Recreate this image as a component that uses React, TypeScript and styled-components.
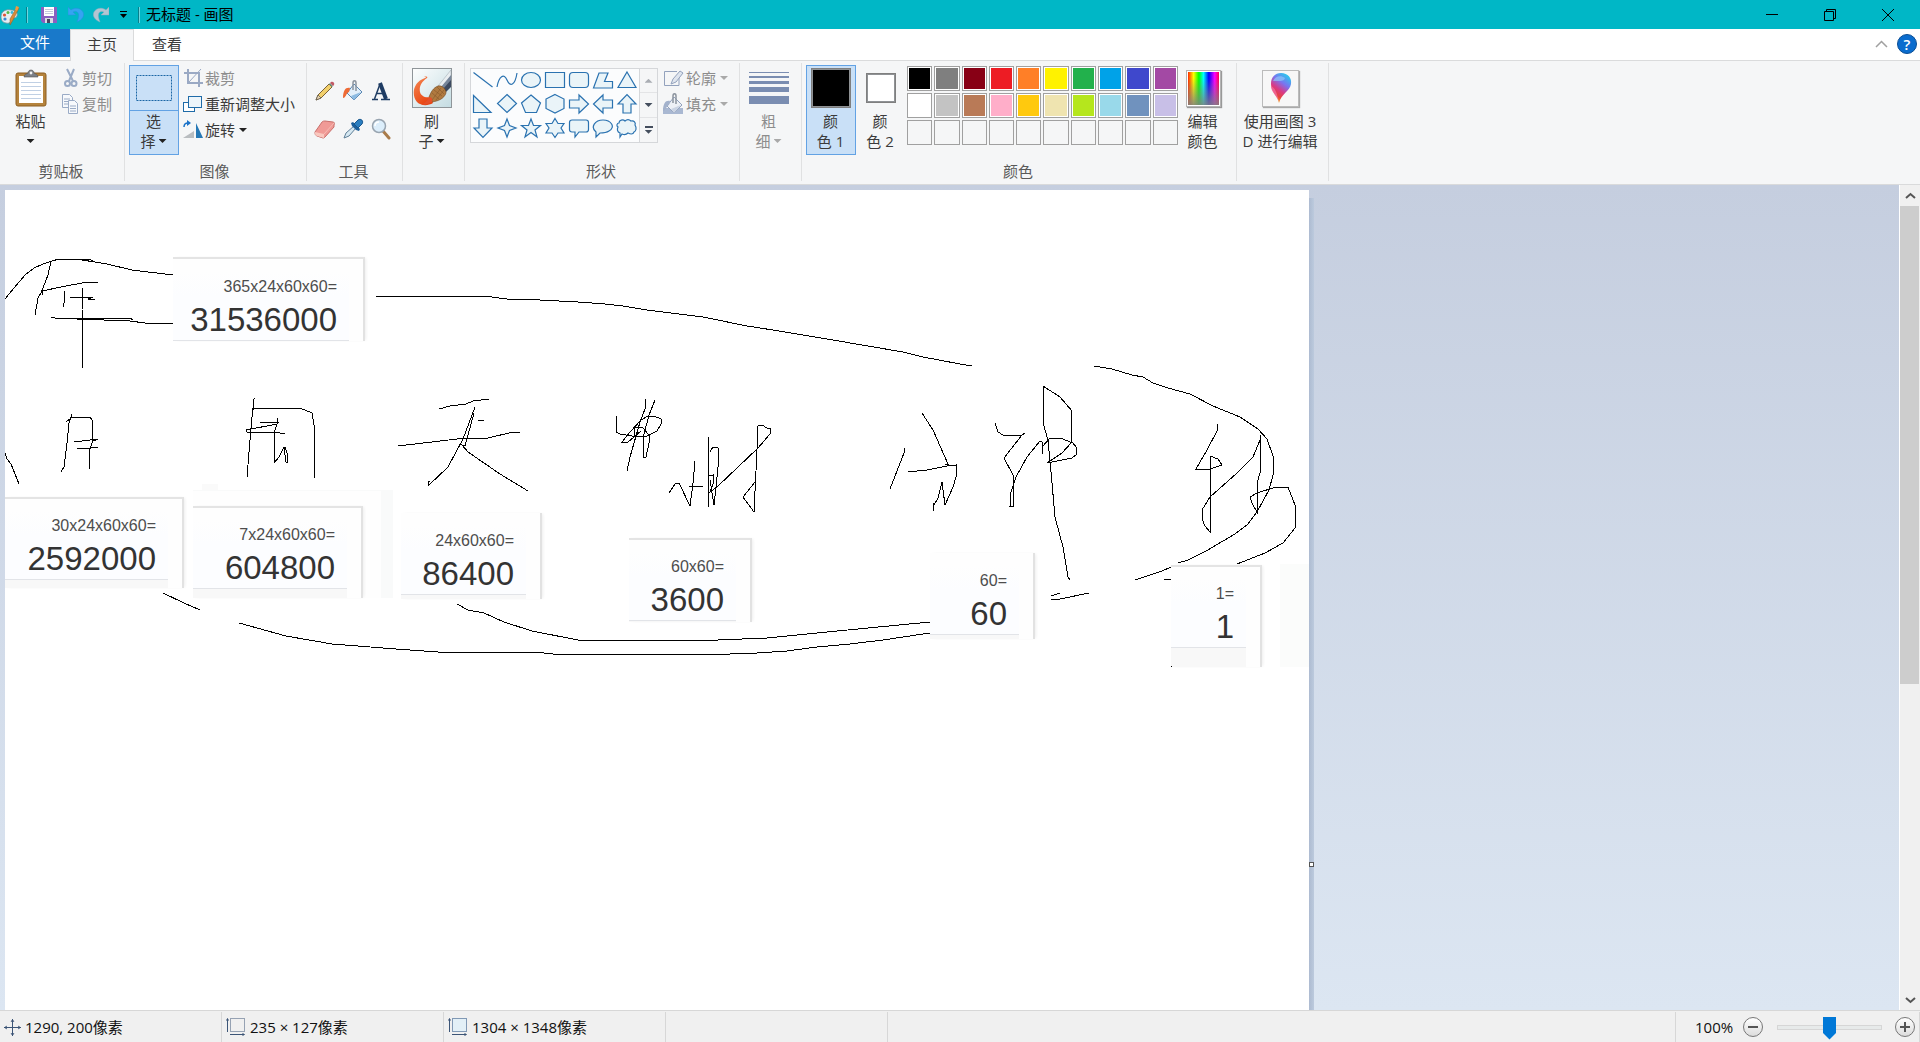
import React from 'react';
import styled, { createGlobalStyle } from 'styled-components';

const Global = createGlobalStyle`
  *, *::before, *::after { box-sizing: border-box; }
  html, body { margin: 0; padding: 0; }
  body {
    font-family: "Open Sans", "Noto Sans CJK SC", sans-serif;
    font-size: 15px;
    line-height: 20px;
    color: #3b3b3b;
  }
  button {
    font: inherit;
    color: inherit;
    background: none;
    border: 0;
    padding: 0;
    margin: 0;
  }
  svg { display: block; flex: none; }
`;

const Window = styled.div`
  display: flex;
  flex-direction: column;
  height: 100vh;
  overflow: hidden;
  background: #f5f6f7;
`;

/* ---------- title bar ---------- */

const TitleBar = styled.header`
  display: flex;
  align-items: center;
  height: 29px;
  flex: none;
  padding-right: 3px;
  background: #00b7c6;
  color: #000;
`;

const QuickAccess = styled.div`
  display: flex;
  align-items: center;
  height: 29px;
`;

const QuickButton = styled.button<{ $w?: number }>`
  display: flex;
  align-items: center;
  justify-content: center;
  width: ${(p) => p.$w ?? 26}px;
  height: 29px;
`;

const Divider = styled.span`
  width: 2px;
  height: 16px;
  margin: 0 6px;
  background: #087f8b;
  border-right: 1px solid #6fd6df;
`;

const Title = styled.h1`
  margin: 0;
  padding-bottom: 2px;
  flex: 1;
  font-size: 15px;
  line-height: 20px;
  font-weight: 400;
`;

const CaptionButton = styled.button`
  display: flex;
  align-items: center;
  justify-content: center;
  width: 58px;
  height: 29px;
`;

/* ---------- tabs ---------- */

const TabRow = styled.nav`
  display: flex;
  flex: none;
  height: 32px;
  background: #fff;
  border-bottom: 1px solid #dadbdc;
`;

const FileTab = styled.button`
  width: 70px;
  height: 28px;
  padding-bottom: 2px;
  background: #1979ca;
  color: #fff;
`;

const Tab = styled.button<{ $active?: boolean }>`
  width: ${(p) => (p.$active ? 64 : 66)}px;
  height: 32px;
  padding-bottom: 4px;
  border: 1px solid ${(p) => (p.$active ? '#dadbdc' : 'transparent')};
  border-bottom: 0;
  background: ${(p) => (p.$active ? '#f5f6f7' : 'transparent')};
`;

const TabTools = styled.div`
  display: flex;
  align-items: center;
  gap: 9px;
  margin-left: auto;
  padding: 0 3px 2px 0;
`;

const HelpButton = styled.button`
  width: 20px;
  height: 20px;
  border-radius: 50%;
  border: 1px solid #0a4d94;
  background: #0a6cce;
  color: #fff;
  font-size: 15px;
  line-height: 18px;
  font-weight: 600;
`;

/* ---------- ribbon ---------- */

const Ribbon = styled.section`
  display: flex;
  flex: none;
  height: 124px;
  padding: 2px 0 3px;
  background: #f5f6f7;
  border-bottom: 1px solid #d9dadb;
`;

const Group = styled.div<{ $w: number }>`
  display: flex;
  flex-direction: column;
  flex: none;
  width: ${(p) => p.$w}px;
  border-right: 1px solid #e0e1e2;
`;

const GroupBody = styled.div`
  display: flex;
  flex: 1;
  align-items: flex-start;
  padding: 2px 0 0 4px;
`;

const GroupLabel = styled.div`
  height: 20px;
  padding-right: 2px;
  color: #5a5a5a;
  text-align: center;
`;

const BigButton = styled.button<{ $w: number; $on?: boolean; $off?: boolean }>`
  display: flex;
  flex-direction: column;
  align-items: center;
  flex: none;
  width: ${(p) => p.$w}px;
  height: 90px;
  border: 1px solid ${(p) => (p.$on ? '#62a2e4' : 'transparent')};
  background: ${(p) => (p.$on ? '#c9e0f7' : 'transparent')};
  color: ${(p) => (p.$off ? '#8d8d8d' : 'inherit')};
`;

const IconArea = styled.span<{ $split?: boolean }>`
  display: flex;
  align-items: center;
  justify-content: center;
  align-self: stretch;
  flex: none;
  height: 45px;
  border-bottom: 1px solid ${(p) => (p.$split ? '#62a2e4' : 'transparent')};
`;

const TextLine = styled.span`
  display: flex;
  align-items: center;
  justify-content: center;
  gap: 3px;
  height: 20px;
  padding-right: 1px;
  white-space: pre;
`;

const Caret = styled.span<{ $color?: string; $up?: boolean }>`
  width: 8px;
  height: 4px;
  background: ${(p) => p.$color ?? '#222'};
  clip-path: ${(p) =>
    p.$up ? 'polygon(50% 0, 100% 100%, 0 100%)' : 'polygon(0 0, 100% 0, 50% 100%)'};
`;

const SmallColumn = styled.div`
  display: flex;
  flex-direction: column;
  padding-left: 4px;
`;

const SmallButton = styled.button<{ $off?: boolean }>`
  display: flex;
  align-items: center;
  height: 26px;
  gap: 2px;
  color: ${(p) => (p.$off ? '#8d8d8d' : 'inherit')};
  white-space: nowrap;

  ${Caret} { margin-left: 2px; }
`;

const ToolGrid = styled.div`
  display: grid;
  grid-template-columns: repeat(3, 28px);
  grid-auto-rows: 38px;
  padding-top: 7px;
`;

const ToolButton = styled.button`
  display: flex;
  align-items: center;
  justify-content: center;
`;

const Gallery = styled.div`
  display: flex;
  height: 75px;
  margin: 3px 0 0 1px;
  border: 1px solid #d5d7da;
  background: #fbfcfd;
`;

const ShapeGrid = styled.div`
  display: grid;
  grid-template-columns: repeat(7, 24px);
  grid-auto-rows: 24px;
  margin-top: -1px;
`;

const GalleryScroll = styled.div`
  display: grid;
  grid-template-rows: repeat(3, 1fr);
  width: 18px;
  border-left: 1px solid #d5d7da;
  background: #f5f6f7;
`;

const ScrollStep = styled.button`
  display: flex;
  flex-direction: column;
  align-items: center;
  justify-content: center;
  gap: 2px;
  border-bottom: 1px solid #e3e4e6;

  &:last-child { border-bottom: 0; }
`;

const Bar = styled.span`
  width: 8px;
  height: 2px;
  background: #444e5e;
`;

const CurrentColor = styled.span<{ $size: number; $fill: string }>`
  width: ${(p) => p.$size}px;
  height: ${(p) => p.$size}px;
  border: 1px solid #7f7f7f;
  outline: 1px solid #8f9295;
  outline-offset: -2px;
  background: ${(p) => p.$fill};
`;

const Palette = styled.div`
  display: grid;
  grid-template-columns: repeat(10, 1fr);
  grid-template-rows: repeat(3, 25px);
  gap: 2px;
  flex: none;
  width: 271px;
  margin: 1px 0 0 2px;
`;

const Swatch = styled.button<{ $fill?: string }>`
  border: 1px solid #a0a0a0;
  background-color: ${(p) => p.$fill ?? '#f5f6f7'};
  box-shadow: inset 0 0 0 1px ${(p) => (p.$fill ? '#fff' : '#f5f6f7')};
`;

const Spectrum = styled.span`
  width: 35px;
  height: 37px;
  border: 1px solid #b4b4b4;
  outline: 1px solid #fff;
  outline-offset: -2px;
  box-shadow: 1px 1px 1px #999;
  background:
    linear-gradient(to bottom, rgba(128, 128, 128, 0) 20%, rgba(128, 128, 128, 0.9)),
    linear-gradient(to right, #f00, #ff0 20%, #0f0 36%, #0ff 50%, #00f 66%, #f0f 84%, #f02);
`;

const Tile = styled.span`
  display: flex;
  align-items: center;
  justify-content: center;
  width: 37px;
  height: 37px;
  border: 1px solid #bbb;
  box-shadow: 1px 1px 1px #aaa;
  background: #f7f7f7;
`;

/* ---------- workspace ---------- */

const Workspace = styled.main`
  display: flex;
  flex: 1;
  min-height: 0;
`;

const Viewport = styled.div`
  flex: 1;
  min-width: 0;
  overflow: hidden;
  padding: 5px;
  background: linear-gradient(#c5cedf, #dce6f2);
`;

const Canvas = styled.div`
  position: relative;
  width: 1304px;
  height: 1348px;
  background: #fff;

  &::after {
    content: "";
    position: absolute;
    left: 100%;
    top: 8px;
    bottom: 0;
    width: 5px;
    background: linear-gradient(to right, #adbbd1, #bccadd);
  }
`;

const ResizeHandle = styled.span`
  position: absolute;
  z-index: 1;
  left: 100%;
  top: 50%;
  width: 5px;
  height: 5px;
  margin-top: -2px;
  border: 1px solid #555;
  background: #fff;
`;

const Ink = styled.svg`
  position: absolute;
  inset: 0;
`;

const Patch = styled.div<{ $x: number; $y: number; $w: number; $h: number; $fill: string }>`
  position: absolute;
  left: ${(p) => p.$x}px;
  top: ${(p) => p.$y}px;
  width: ${(p) => p.$w}px;
  height: ${(p) => p.$h}px;
  background: ${(p) => p.$fill};
`;

const Clip = styled.div<{ $x: number; $y: number; $w: number; $h: number; $top: boolean }>`
  position: absolute;
  left: ${(p) => p.$x}px;
  top: ${(p) => p.$y}px;
  width: ${(p) => p.$w}px;
  height: ${(p) => p.$h}px;
  padding-right: 14px;
  border-right: 2px solid #e2e2e2;
  border-top: ${(p) => (p.$top ? 2 : 0)}px solid #e4e4e4;
  background: #fefefe;
  box-shadow: 2px 0 3px -1px #eee;
`;

const Display = styled.div<{ $h: number }>`
  display: flex;
  flex-direction: column;
  justify-content: flex-end;
  gap: 3px;
  height: ${(p) => p.$h}px;
  padding-right: 12px;
  border-bottom: 1px solid #e2e4e8;
  background: linear-gradient(#fefefe 12px, #fcfdff 36px);
  font-family: "Liberation Sans", sans-serif;
  text-align: right;
`;

const Footer = styled.div<{ $h: number }>`
  height: ${(p) => p.$h}px;
  background: #f8f8f8;
`;

const Formula = styled.div`
  font-size: 16px;
  line-height: 20px;
  color: #4d4d4d;
`;

const Result = styled.div`
  font-size: 33px;
  line-height: 40px;
  color: #333;
`;

const ScrollBar = styled.div`
  display: flex;
  flex-direction: column;
  flex: none;
  width: 21px;
  border-left: 1px solid #fff;
  background: #f0f0f0;
`;

const ScrollArrow = styled.button`
  display: flex;
  align-items: center;
  justify-content: center;
  flex: none;
  height: 21px;
`;

const Track = styled.div`
  flex: 1;
  padding-right: 1px;
`;

const Thumb = styled.div`
  height: 61%;
  background: #cdcdcd;
`;

/* ---------- status bar ---------- */

const StatusBar = styled.footer`
  display: flex;
  flex: none;
  height: 32px;
  padding-top: 1px;
  border-top: 1px solid #d7d7d7;
  background: #f0f0f0;
  color: #111;
`;

const StatusCell = styled.div`
  display: flex;
  align-items: center;
  gap: 4px;
  width: 222px;
  padding-left: 4px;
  border-right: 1px solid #d7d7d7;
`;

const ZoomArea = styled.div`
  display: flex;
  align-items: center;
  margin-left: auto;
  padding: 0 4px 0 19px;
  border-left: 1px solid #d7d7d7;
  border-right: 1px solid #d7d7d7;
`;

const ZoomLabel = styled.label`
  width: 48px;
`;

const RoundButton = styled.button`
  display: flex;
  align-items: center;
  justify-content: center;
  width: 20px;
  height: 20px;
  border: 1px solid #777;
  border-radius: 50%;
  background: linear-gradient(#fff, #dcdcdc);
`;

const Slider = styled.input`
  appearance: none;
  width: 105px;
  height: 24px;
  margin: 0 13px 0 14px;
  background: transparent;

  &::-webkit-slider-runnable-track {
    height: 5px;
    border: 1px solid #d6d6d6;
    background: #e7eaea;
  }

  &::-webkit-slider-thumb {
    appearance: none;
    width: 13px;
    height: 23px;
    margin-top: -9px;
    background: #0078d7;
    clip-path: polygon(0 0, 100% 0, 100% 72%, 50% 100%, 0 72%);
  }
`;

/* ---------- icons ---------- */

const AppIcon = () => (
  <svg width="20" height="20" viewBox="0 0 20 20">
    <path d="M1 12C1 6 6 4 11 5c5 0 7 3 6 6-1 3-4 1-5 3-1 3-3 5-6 4-3 0-5-3-5-6z" fill="#e4eef2" stroke="#71929c" strokeWidth=".8" />
    <circle cx="4.500" cy="10" r="1.600" fill="#e0523a" />
    <circle cx="8" cy="7.500" r="1.500" fill="#58b947" />
    <circle cx="5" cy="14" r="1.600" fill="#3c86d4" />
    <circle cx="12" cy="7.500" r="1.400" fill="#3fb8d8" />
    <path d="M17 2l2 1-6 12-3 5 0-6z" fill="#d98b3a" stroke="#9a5b1d" strokeWidth=".5" />
    <path d="M16 1l3 1-2 4-2-1z" fill="#ef9b3f" />
  </svg>
);

const SaveIcon = () => (
  <svg width="16" height="16" viewBox="0 0 16 16">
    <path d="M0 0h16v16H2l-2-2z" fill="#8a5fc0" />
    <path d="M3 0h10v9H3z" fill="#fff" />
    <path d="M4 2.500h8M4 4.500h8M4 6.500h8" stroke="#c5c9dd" />
    <path d="M4 11h8v5H4z" fill="#d9dbe2" />
    <path d="M6 12h3v4H6z" fill="#4a4560" />
  </svg>
);

const UndoIcon = () => (
  <svg width="16" height="17" viewBox="0 0 16 17">
    <path d="M0 1v8h8L5 6c4-2 8 1 4 10 5-2 8-6 6-10C13 2 7 1 3 4z" fill="#35a4f2" stroke="#2391de" strokeWidth=".5" />
  </svg>
);

const RedoIcon = () => (
  <svg width="16" height="17" viewBox="0 0 16 17">
    <path d="M16 1v8H8l3-3c-4-2-8 1-4 10C2 14-1 10 1 6 3 2 9 1 13 4z" fill="#b3c5d2" stroke="#93aaba" strokeWidth=".5" />
  </svg>
);

const QatMenuIcon = () => (
  <svg width="7" height="8" viewBox="0 0 7 8">
    <path d="M0 .5h7" stroke="#000" />
    <path d="M0 3h7L3.500 7z" fill="#000" />
  </svg>
);

const ClipboardIcon = () => (
  <svg width="32" height="38" viewBox="0 0 32 38">
    <rect x="1" y="4" width="30" height="33" rx="2" fill="#b5833c" stroke="#8d5f22" />
    <rect x="4" y="7" width="24" height="27" fill="#fff" />
    <path d="M6 13.500h20M6 17.500h20M6 21.500h20M6 25.500h20M6 29.500h20" stroke="#c0d0e4" />
    <path d="M9 8c0-3 3-3 4-4 0-4 6-4 6 0 1 1 4 1 4 4z" fill="#7c8087" stroke="#555" strokeWidth=".6" />
    <circle cx="16" cy="4" r="1.400" fill="#f3f4f5" />
  </svg>
);

const CutIcon = () => (
  <svg width="18" height="20" viewBox="0 0 18 20" fill="none" stroke="#9aabc6" strokeWidth="2">
    <path d="M5 1l6 12M12 1L7 13" />
    <circle cx="5.500" cy="15.500" r="2.500" />
    <circle cx="12" cy="15.500" r="2.500" />
  </svg>
);

const CopyIcon = () => (
  <svg width="18" height="20" viewBox="0 0 18 20" fill="#f7f9fc" stroke="#9aabc6">
    <path d="M.5 .5h7l3 3v10H.5z" />
    <path d="M2 5h6M2 7.500h6M2 10h6" />
    <path d="M6.500 6.500h6l3 3v10h-9z" />
    <path d="M8 12h6M8 14.500h6M8 17h6" />
  </svg>
);

const SelectIcon = () => (
  <svg width="36" height="26" viewBox="0 0 36 26">
    <rect x=".5" y=".5" width="35" height="25" fill="none" stroke="#1b66a5" strokeDasharray="2 1" />
  </svg>
);

const CropIcon = () => (
  <svg width="20" height="18" viewBox="0 0 20 18" fill="none" stroke="#9aa9c4">
    <path d="M5 0v14h15M1 4h15v14" strokeWidth="2" />
    <path d="M18 0L6 13" />
  </svg>
);

const ResizeIcon = () => (
  <svg width="20" height="17" viewBox="0 0 20 17" fill="#fff" stroke="#1f6ba8">
    <rect x=".5" y="6.500" width="11" height="9" />
    <rect x="5.500" y=".5" width="13" height="11" fill="#edf5fa" />
  </svg>
);

const RotateIcon = () => (
  <svg width="20" height="20" viewBox="0 0 20 20">
    <path d="M11 11v7H0z" fill="#b9bdc0" />
    <path d="M13 3l7 15h-7z" fill="#2678b5" />
    <path d="M1 7c0-3 1-4 4-4" fill="none" stroke="#1b72c8" strokeWidth="1.500" />
    <path d="M4 0l4 3-4 3z" fill="#1b72c8" />
  </svg>
);

const PencilIcon = () => (
  <svg width="22" height="22" viewBox="0 0 22 22">
    <path d="M2 20l2-5L15 4l3 3L7 18z" fill="#f2d06c" stroke="#7c6237" />
    <path d="M2 20l2-5 3 3z" fill="#e9d4b0" stroke="#444" strokeWidth=".6" />
    <path d="M15 4l3 3 1-1-3-3z" fill="#6b9a86" />
    <path d="M16 3l1-1c2-1 4 1 3 3l-1 1z" fill="#c25a66" />
  </svg>
);

const BucketIcon = ({ off }: { off?: boolean }) => (
  <svg width="22" height="22" viewBox="0 0 22 22">
    {off && <rect x="1" y="15" width="20" height="6" fill="#a9b8d2" />}
    <path d="M12 4l8 8-8 8-7-7z" fill={off ? '#eef1f6' : '#e2effa'} stroke={off ? '#93a2bd' : '#5a87b3'} />
    <path d="M9 16l10-4-7 8z" fill={off ? '#cbd4e3' : '#8dbbe2'} />
    <path d="M11 10V3c0-3 3-3 3 0v8" fill="none" stroke="#8c949e" strokeWidth="1.500" />
    <path d="M8 8C4 7 1 10 1 18c3 0 3-5 6-6z" fill={off ? '#a3b2cc' : '#ee6a35'} />
  </svg>
);

const TextIcon = () => (
  <svg width="20" height="20" viewBox="0 0 20 20" fill="none" stroke="#1e3c63">
    <path d="M3.500 18L9 3" strokeWidth="1.500" />
    <path d="M9 2l6 16" strokeWidth="4" />
    <path d="M6 12.500h6" strokeWidth="1.500" />
    <path d="M1 18.500h6M10 18.500h9" strokeWidth="1.500" />
  </svg>
);

const EraserIcon = () => (
  <svg width="22" height="22" viewBox="0 0 22 22">
    <path d="M1 14L8 4c1-1 2-1 3-1l8 1c1 0 2 1 1 3v2l-9 10c-1 1-1 1-2 1l-6-2c-2-1-2-2-2-4z" fill="#f09a96" stroke="#c9706c" />
    <path d="M1 14l9 2v4l-7-2c-2-1-2-2-2-4z" fill="#f9c8bf" />
    <path d="M10 16L20 5" stroke="#f7bbb4" />
  </svg>
);

const PickerIcon = () => (
  <svg width="22" height="22" viewBox="0 0 22 22">
    <path d="M2 20l2-5 8-7 2 2-7 8z" fill="#d6e8f2" stroke="#5f7f97" />
    <path d="M9 5l2-1 7 7-1 2-3-1-4-4z" fill="#1c5f9b" />
    <path d="M12 6l4-4c3-2 6 1 4 4l-4 4z" fill="#2b7ec0" stroke="#17558c" />
  </svg>
);

const MagnifierIcon = () => (
  <svg width="22" height="22" viewBox="0 0 22 22">
    <path d="M13 13l6 7" stroke="#a97b4a" strokeWidth="3" strokeLinecap="round" />
    <circle cx="9" cy="8" r="6.500" fill="#dceefb" stroke="#98a4b0" strokeWidth="1.500" />
    <path d="M5 8c0-3 2-4 4-4" fill="none" stroke="#fff" strokeWidth="1.500" />
  </svg>
);

const BrushIcon = () => (
  <svg width="40" height="40" viewBox="0 0 40 40">
    <defs>
      <linearGradient id="brushBg" x1="0" y1="0" x2="1" y2="1">
        <stop offset="0" stopColor="#fdfefe" />
        <stop offset="1" stopColor="#c4dce2" />
      </linearGradient>
      <linearGradient id="paint" x1="0" y1="0" x2=".6" y2="1">
        <stop offset="0" stopColor="#f58a55" />
        <stop offset="1" stopColor="#e8420f" />
      </linearGradient>
    </defs>
    <rect x=".5" y=".5" width="39" height="39" fill="url(#brushBg)" stroke="#8f9599" />
    <path d="M39 2L26 18l3 3L39 11z" fill="#e9eef1" stroke="#9aa5ad" strokeWidth=".5" />
    <path d="M39 8L29 20l5 4 5-5z" fill="#3c4a60" />
    <path d="M39 7L29 19l2 2 8-9z" fill="#77869a" />
    <path d="M12 9c3-1 4 0 3 1C9 14 7 19 8 24c1 4 5 6 10 5l3 6c-5 3-12 3-16-1C-1 27 1 14 13 10c2-1 1-1-1-1z" fill="url(#paint)" />
    <path d="M26 18c4-1 8 3 8 7-2 6-8 8-14 9 0-2-1-4-3-5 2-5 4-9 9-11z" fill="#b07a40" stroke="#6f451d" strokeWidth=".6" />
    <path d="M20 25l7 6M22 22l8 6M25 19l7 7M20 32l9-12M24 32l8-10" stroke="#7f5227" strokeWidth=".5" />
    <path d="M17 29c3 0 4 3 3 5-3 2-7 3-11 3 4-2 6-4 8-8z" fill="#e4502a" />
  </svg>
);

const OutlineIcon = () => (
  <svg width="22" height="20" viewBox="0 0 22 20" fill="none" stroke="#93a2bd">
    <path d="M17 9v8.500H2.500v-14H15" />
    <path d="M9 16l2-5 7-8 3 2-7 9z" fill="#dfe5ee" />
  </svg>
);

const SizeIcon = () => (
  <svg width="40" height="33" viewBox="0 0 40 33" fill="#7a8db1">
    <path d="M0 0h40v1H0zM0 4h40v2H0zM0 9h40v3H0zM0 15h40v5H0zM0 24h40v8H0z" />
  </svg>
);

const Paint3DIcon = () => (
  <svg width="24" height="32" viewBox="0 0 24 32">
    <defs>
      <linearGradient id="dropFill" x1=".8" y1="0" x2=".3" y2="1">
        <stop offset="0" stopColor="#1fd4ee" />
        <stop offset=".35" stopColor="#7a74f0" />
        <stop offset=".6" stopColor="#d93a86" />
        <stop offset=".8" stopColor="#e8443a" />
        <stop offset="1" stopColor="#f9c21b" />
      </linearGradient>
    </defs>
    <path d="M12 1c7 0 11 5 10 11-1 7-10 10-12 19-1-7-8-11-8-19C2 5 6 1 12 1z" fill="url(#dropFill)" />
    <path d="M4 9c2-5 8-6 12-3-1 4-7 3-12 3z" fill="#8fc4fa" opacity=".7" />
    <path d="M2 14c4 2 6 6 8 17-1-7-8-10-8-17z" fill="#f06aa0" opacity=".8" />
  </svg>
);

const Chevron = ({ up, color, w = 2 }: { up?: boolean; color: string; w?: number }) => (
  <svg width="13" height="8" viewBox="0 0 13 8" fill="none" stroke={color} strokeWidth={w}>
    <path d={up ? 'M2 6l4.500-4L11 6' : 'M2 2l4.500 4L11 2'} />
  </svg>
);

const shapes: { name: string; d: string }[] = [
  { name: '直线', d: 'M2.500 4.500L21.500 19' },
  { name: '曲线', d: 'M2 19C4 8 9 5 12 12S20 18 22 5' },
  { name: '椭圆形', d: 'M2.500 12a9.500 7.500 0 1 0 19 0a9.500 7.500 0 1 0-19 0z' },
  { name: '矩形', d: 'M2.500 4.500h19v15h-19z' },
  { name: '圆角矩形', d: 'M6 4.500h12q3.500 0 3.500 3.500v8q0 3.500-3.500 3.500H6q-3.500 0-3.500-3.500V8q0-3.500 3.500-3.500z' },
  { name: '多边形', d: 'M8 5h9l-3.500 8.500h8v6.500h-19z' },
  { name: '三角形', d: 'M12 4l9 15.500H3z' },
  { name: '直角三角形', d: 'M2.500 3.500v17H20z' },
  { name: '菱形', d: 'M12 2.500l9.500 9-9.500 9-9.500-9z' },
  { name: '五边形', d: 'M12 3l9.500 8-4 9.500h-11l-4-9.500z' },
  { name: '六边形', d: 'M12 2.500l9 4.500v9.500L12 21l-9-4.500V7z' },
  { name: '右箭头', d: 'M2.500 8H12V3l9.500 9-9.500 9v-5H2.500z' },
  { name: '左箭头', d: 'M21.500 8H12V3l-9.500 9 9.500 9v-5h9.500z' },
  { name: '上箭头', d: 'M8 21v-9H3l9-9.500 9 9.500h-5v9z' },
  { name: '下箭头', d: 'M8 3v9H3l9 9.500 9-9.500h-5V3z' },
  { name: '四角星形', d: 'M12 3l2.500 6.500L21 12l-6.500 2.500L12 21l-2.500-6.500L3 12l6.500-2.500z' },
  { name: '五角星形', d: 'M12 3l2.500 6.500H21.500L16 14l2 7-6-4.500L6 21l2-7-5.500-4.500H9.500z' },
  { name: '六角星形', d: 'M12 2.500l3 5h6L18 12l3 5h-6l-3 4.500L9 17H3l3-5-3-4.500h6z' },
  { name: '圆角矩形标注', d: 'M5 4h14q2.500 0 2.500 2.500v7q0 2.500-2.500 2.500h-7l-4 5v-5H5q-2.500 0-2.500-2.500v-7Q2.500 4 5 4z' },
  { name: '椭圆形标注', d: 'M5 16C-1 11 4 4 12 4s13 7 6 11c-3 2-6 2-9 2l-4 4z' },
  { name: '云形标注', d: 'M4 7c0-3 4-4 6-2 2-2 4-2 6 0 3-1 5 2 4 4 2 3 1 6-1 7-1 3-4 2-6 1-2 2-4 2-6 1l-2 3v-4c-3-1-3-4-2-6-2-1-1-4 1-4z' },
];

const swatches: { name: string; fill?: string }[] = [
  { name: '黑色', fill: '#000000' },
  { name: '灰色-50%', fill: '#7f7f7f' },
  { name: '深红色', fill: '#880015' },
  { name: '红色', fill: '#ed1c24' },
  { name: '橙色', fill: '#ff7f27' },
  { name: '黄色', fill: '#fff200' },
  { name: '绿色', fill: '#22b14c' },
  { name: '青绿色', fill: '#00a2e8' },
  { name: '靛蓝色', fill: '#3f48cc' },
  { name: '紫色', fill: '#a349a4' },
  { name: '白色', fill: '#ffffff' },
  { name: '灰色-25%', fill: '#c3c3c3' },
  { name: '褐色', fill: '#b97a57' },
  { name: '玫瑰色', fill: '#ffaec9' },
  { name: '金色', fill: '#ffc90e' },
  { name: '浅黄色', fill: '#efe4b0' },
  { name: '酸橙色', fill: '#b5e61d' },
  { name: '淡青绿色', fill: '#99d9ea' },
  { name: '蓝灰色', fill: '#7092be' },
  { name: '淡紫色', fill: '#c8bfe7' },
  ...Array.from({ length: 10 }, (_, i) => ({ name: `自定义颜色 ${i + 1}` })),
];

/* Pencil strokes, one polyline each. */
const strokes: string[] = [
  // curve through the top left corner
  '5,299 14,288 25,275 34,268 43,264 52,261 59,259 89,259 95,262 82,260 107,264 132,270 173,275',
  // 年
  '51,261 48,275 41,293 38,298 35,315',
  '42,295 42,291 66,286 88,282 98,282',
  '64,291 64,303 63,307',
  '70,297 93,297 88,299 95,299',
  '83,288 82,310 82,368',
  '51,317 55,318 130,318 133,320',
  '77,319 104,320 130,321 145,323 173,323',
  // long upper line
  '376,296 484,296 507,299 540,300 578,302 605,304 623,306 647,310 703,317 747,326 773,330 827,339 903,352 923,357 960,364 972,366',
  // 月
  '72,414 69,423 67,443 64,467 61,472',
  '66,422 71,418 90,417 92,420 92,443 89,452 89,469',
  '74,442 98,439 93,441',
  '77,448 90,448 98,447',
  '5,453 7,459 11,464 19,484',
  // 周
  '255,398 254,399 252,417 250,440 247,477',
  '252,412 254,408 300,408 312,413 314,425 314,478',
  '260,422 279,422',
  '278,418 277,424 246,430 247,432 275,432 285,434',
  '277,424 274,433 274,463 279,457 284,447 286,462 287,462 287,453 285,447',
  // 天
  '439,409 450,406 466,404 473,401 489,399',
  '475,407 463,439 448,467 428,486 428,482 430,481',
  '474,413 465,446 462,445 468,452 500,474 528,491',
  '478,420 484,420',
  '398,446 457,439 488,438 509,433 520,432',
  // 小
  '645,399 645,409 640,422 630,457 627,471',
  '655,400 649,415 643,438 643,457 646,457 649,443 649,435 642,427 634,428 634,437',
  '617,416 616,432 620,434 632,436 647,436 657,431 661,424 661,419 654,416 648,416 641,420 630,432 622,442 628,442 641,431',
  // 时
  '669,493 675,484 679,483 690,506 693,483 695,461',
  '689,486 697,486 703,487',
  '708,437 708,507',
  '710,452 713,447 718,448 718,467 716,487 714,505 710,480',
  '709,476 713,475 713,484 710,492 717,487 758,448 770,434 771,429 767,428 762,425 758,426 757,450 754,512 743,497 755,482',
  // 分
  '904,448 904,453 890,489',
  '922,413 933,430 948,464 945,464',
  '908,472 927,470 947,466 956,465 956,477 953,487 945,505 942,482 938,498 933,507 933,511 933,503',
  // 钟
  '995,423 998,432 1003,435 1022,435 1025,433 1022,435 1004,458 1013,475 1013,506 1010,506 1011,492 1016,477 1027,457 1040,441 1042,442 1042,454 1042,447 1050,438 1060,438 1073,443 1076,447 1076,455 1072,458 1047,463 1062,453 1071,443 1072,411 1060,397 1043,386 1043,423 1048,440 1052,483 1055,517 1063,547 1068,577 1070,580',
  '1051,596 1060,593',
  '1051,600 1060,599 1089,593',
  // right arc
  '1094,366 1112,369 1132,375 1143,377 1153,383 1168,388 1190,394 1213,406 1240,417 1258,429 1267,439 1273,456 1273,475 1269,490 1257,512 1248,524 1235,534 1206,551 1188,560 1178,563',
  '1171,567 1162,571 1135,580',
  '1164,580 1171,579',
  // 秒
  '1218,424 1217,431 1207,450 1196,469 1210,469 1222,465 1218,459 1210,456 1210,532 1205,526 1202,519 1202,510 1210,497 1237,473 1253,457 1260,440 1260,435 1260,473 1257,483 1257,512 1252,503 1250,497 1257,493 1273,488 1288,487 1295,505 1295,528 1283,543 1265,553 1237,564',
  // lower curves
  '163,593 184,603 200,610',
  '239,623 286,636 332,644 396,649 438,652 535,652 553,654 730,654 757,653 787,651 817,647 850,644 883,640 903,637 930,633',
  '457,604 468,610 484,613 504,622 532,631 578,640 718,640 767,638 827,632 930,622',
  '1171,666 1172,666',
];

/* Pasted calculator snippets; h is the display height, foot the strip below it. */
const clips = [
  { x: 168, y: 67, w: 192, h: 82, foot: 0, top: true, formula: '365x24x60x60=', result: '31536000' },
  { x: 0, y: 307, w: 179, h: 81, foot: 8, top: true, formula: '30x24x60x60=', result: '2592000' },
  { x: 188, y: 316, w: 170, h: 81, foot: 9, top: true, formula: '7x24x60x60=', result: '604800' },
  { x: 396, y: 323, w: 141, h: 82, foot: 4, top: false, formula: '24x60x60=', result: '86400' },
  { x: 624, y: 348, w: 123, h: 81, foot: 1, top: true, formula: '60x60=', result: '3600' },
  { x: 925, y: 363, w: 105, h: 82, foot: 4, top: false, formula: '60=', result: '60' },
  { x: 1166, y: 375, w: 91, h: 81, foot: 19, top: true, formula: '1=', result: '1' },
];

export default function App() {
  return (
    <Window>
      <Global />
      <TitleBar>
        <QuickAccess>
          <AppIcon />
          <Divider />
          <QuickButton $w={29} aria-label="保存"><SaveIcon /></QuickButton>
          <QuickButton $w={25} aria-label="撤消"><UndoIcon /></QuickButton>
          <QuickButton aria-label="重做"><RedoIcon /></QuickButton>
          <QuickButton $w={18} aria-label="自定义快速访问工具栏"><QatMenuIcon /></QuickButton>
          <Divider />
        </QuickAccess>
        <Title>无标题 - 画图</Title>
        <CaptionButton aria-label="最小化">
          <svg width="12" height="12" viewBox="0 0 12 12"><path d="M0 5.500h12" stroke="#000" /></svg>
        </CaptionButton>
        <CaptionButton aria-label="向下还原">
          <svg width="12" height="12" viewBox="0 0 12 12" fill="none" stroke="#000">
            <path d="M.5 2.500h9v9h-9zM2.500 2.500v-2h9v9h-2" />
          </svg>
        </CaptionButton>
        <CaptionButton aria-label="关闭">
          <svg width="12" height="12" viewBox="0 0 12 12"><path d="M0 0l12 12M12 0L0 12" stroke="#000" /></svg>
        </CaptionButton>
      </TitleBar>

      <TabRow>
        <FileTab>文件</FileTab>
        <Tab $active>主页</Tab>
        <Tab>查看</Tab>
        <TabTools>
          <button aria-label="折叠功能区">
            <svg width="13" height="8" viewBox="0 0 13 8" fill="none" stroke="#a0a0a0" strokeWidth="1.500">
              <path d="M1 7l5.500-5.500L12 7" />
            </svg>
          </button>
          <HelpButton aria-label="帮助">?</HelpButton>
        </TabTools>
      </TabRow>

      <Ribbon>
        <Group $w={125}>
          <GroupBody>
            <BigButton $w={54}>
              <IconArea><ClipboardIcon /></IconArea>
              <TextLine>粘贴</TextLine>
              <TextLine><Caret /></TextLine>
            </BigButton>
            <SmallColumn>
              <SmallButton $off><CutIcon />剪切</SmallButton>
              <SmallButton $off><CopyIcon />复制</SmallButton>
            </SmallColumn>
          </GroupBody>
          <GroupLabel>剪贴板</GroupLabel>
        </Group>

        <Group $w={182}>
          <GroupBody>
            <BigButton $w={50} $on>
              <IconArea $split><SelectIcon /></IconArea>
              <TextLine>选</TextLine>
              <TextLine>择<Caret /></TextLine>
            </BigButton>
            <SmallColumn>
              <SmallButton $off><CropIcon />裁剪</SmallButton>
              <SmallButton><ResizeIcon />重新调整大小</SmallButton>
              <SmallButton><RotateIcon />旋转<Caret /></SmallButton>
            </SmallColumn>
          </GroupBody>
          <GroupLabel>图像</GroupLabel>
        </Group>

        <Group $w={96}>
          <GroupBody>
            <ToolGrid>
              <ToolButton aria-label="铅笔"><PencilIcon /></ToolButton>
              <ToolButton aria-label="用颜色填充"><BucketIcon /></ToolButton>
              <ToolButton aria-label="文本"><TextIcon /></ToolButton>
              <ToolButton aria-label="橡皮擦"><EraserIcon /></ToolButton>
              <ToolButton aria-label="颜色选取器"><PickerIcon /></ToolButton>
              <ToolButton aria-label="放大镜"><MagnifierIcon /></ToolButton>
            </ToolGrid>
          </GroupBody>
          <GroupLabel>工具</GroupLabel>
        </Group>

        <Group $w={62}>
          <GroupBody>
            <BigButton $w={50}>
              <IconArea><BrushIcon /></IconArea>
              <TextLine>刷</TextLine>
              <TextLine>子<Caret /></TextLine>
            </BigButton>
          </GroupBody>
        </Group>

        <Group $w={275}>
          <GroupBody>
            <Gallery>
              <ShapeGrid>
                {shapes.map((s, i) => (
                  <ToolButton key={s.name} aria-label={s.name}>
                    <svg width="24" height="24" viewBox="0 0 24 24">
                      <path d={s.d} fill={i < 2 ? 'none' : '#eaf4f8'} stroke="#2a72b0" strokeWidth="1.200" />
                    </svg>
                  </ToolButton>
                ))}
              </ShapeGrid>
              <GalleryScroll>
                <ScrollStep aria-label="上一行"><Caret $up $color="#a9adb3" /></ScrollStep>
                <ScrollStep aria-label="下一行"><Caret $color="#444e5e" /></ScrollStep>
                <ScrollStep aria-label="更多形状"><Bar /><Caret $color="#444e5e" /></ScrollStep>
              </GalleryScroll>
            </Gallery>
            <SmallColumn>
              <SmallButton $off><OutlineIcon />轮廓<Caret $color="#a9a9a9" /></SmallButton>
              <SmallButton $off><BucketIcon off />填充<Caret $color="#a9a9a9" /></SmallButton>
            </SmallColumn>
          </GroupBody>
          <GroupLabel>形状</GroupLabel>
        </Group>

        <Group $w={62}>
          <GroupBody>
            <BigButton $w={50} $off>
              <IconArea><SizeIcon /></IconArea>
              <TextLine>粗</TextLine>
              <TextLine>细<Caret $color="#a9a9a9" /></TextLine>
            </BigButton>
          </GroupBody>
        </Group>

        <Group $w={435}>
          <GroupBody>
            <BigButton $w={50} $on>
              <IconArea><CurrentColor $size={40} $fill="#000" /></IconArea>
              <TextLine>颜</TextLine>
              <TextLine>色 1</TextLine>
            </BigButton>
            <BigButton $w={49}>
              <IconArea><CurrentColor $size={30} $fill="#fff" /></IconArea>
              <TextLine>颜</TextLine>
              <TextLine>色 2</TextLine>
            </BigButton>
            <Palette>
              {swatches.map((c) => (
                <Swatch key={c.name} aria-label={c.name} $fill={c.fill} />
              ))}
            </Palette>
            <BigButton $w={50}>
              <IconArea><Spectrum /></IconArea>
              <TextLine>编辑</TextLine>
              <TextLine>颜色</TextLine>
            </BigButton>
          </GroupBody>
          <GroupLabel>颜色</GroupLabel>
        </Group>

        <Group $w={92}>
          <GroupBody>
            <BigButton $w={79}>
              <IconArea><Tile><Paint3DIcon /></Tile></IconArea>
              <TextLine>使用画图 3</TextLine>
              <TextLine>D 进行编辑</TextLine>
            </BigButton>
          </GroupBody>
        </Group>
      </Ribbon>

      <Workspace>
        <Viewport>
          <Canvas>
            <Patch $x={197} $y={294} $w={16} $h={6} $fill="#fafafa" />
            <Patch $x={188} $y={300} $w={200} $h={108} $fill="#f9fafa" />
            <Patch $x={188} $y={301} $w={188} $h={107} $fill="#fefefe" />
            <Patch $x={1275} $y={374} $w={29} $h={103} $fill="#fbfcfb" />
            {clips.map((c) => (
              <Clip key={c.result} $x={c.x} $y={c.y} $w={c.w} $h={c.h + c.foot + (c.top ? 2 : 0)} $top={c.top}>
                <Display $h={c.h}>
                  <Formula>{c.formula}</Formula>
                  <Result>{c.result}</Result>
                </Display>
                <Footer $h={c.foot} />
              </Clip>
            ))}
            <Ink width="1304" height="1348" viewBox="5 190 1304 1348" fill="none" stroke="#000" shapeRendering="crispEdges" aria-hidden="true">
              {strokes.map((s) => (
                <polyline key={s} points={s} />
              ))}
            </Ink>
            <ResizeHandle />
          </Canvas>
        </Viewport>
        <ScrollBar>
          <ScrollArrow aria-label="向上滚动"><Chevron up color="#555" /></ScrollArrow>
          <Track><Thumb /></Track>
          <ScrollArrow aria-label="向下滚动"><Chevron color="#555" /></ScrollArrow>
        </ScrollBar>
      </Workspace>

      <StatusBar>
        <StatusCell>
          <svg width="17" height="17" viewBox="0 0 17 17" stroke="#3c5577" fill="#3c5577">
            <path d="M8.500 0v17M0 8.500h17" />
            <path d="M7 2.500L8.500 .5 10 2.500zM7 14.500l1.500 2 1.500-2zM2.500 7l-2 1.500 2 1.500zM14.500 7l2 1.500-2 1.500z" strokeWidth=".5" />
          </svg>
          1290, 200像素
        </StatusCell>
        <StatusCell>
          <svg width="20" height="18" viewBox="0 0 20 18" stroke="#3c5577" fill="none">
            <path d="M1.500 1v13M4 16.500h14M.5 2.500l1-2 1 2M16.500 15.500l2 1-2 1" />
            <rect x="4.500" y=".5" width="14" height="13" strokeDasharray="1 1" />
          </svg>
          235 × 127像素
        </StatusCell>
        <StatusCell>
          <svg width="20" height="18" viewBox="0 0 20 18" stroke="#3c5577" fill="none">
            <path d="M1.500 1v13M4 16.500h14M.5 2.500l1-2 1 2M16.500 15.500l2 1-2 1" />
            <rect x="4.500" y=".5" width="14" height="13" fill="#e3f0f7" stroke="#8199b5" />
          </svg>
          1304 × 1348像素
        </StatusCell>
        <StatusCell />
        <ZoomArea>
          <ZoomLabel htmlFor="zoom">100%</ZoomLabel>
          <RoundButton aria-label="缩小">
            <svg width="10" height="10" viewBox="0 0 10 10"><path d="M0 5h10" stroke="#555" strokeWidth="2" /></svg>
          </RoundButton>
          <Slider id="zoom" type="range" min="0" max="100" defaultValue="50" />
          <RoundButton aria-label="放大">
            <svg width="10" height="10" viewBox="0 0 10 10"><path d="M0 5h10M5 0v10" stroke="#555" strokeWidth="2" /></svg>
          </RoundButton>
        </ZoomArea>
      </StatusBar>
    </Window>
  );
}
